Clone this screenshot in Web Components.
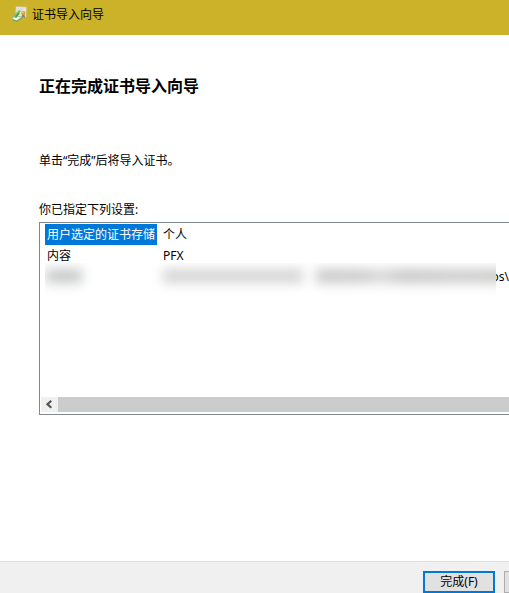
<!DOCTYPE html>
<html lang="zh-CN">
<head>
<meta charset="utf-8">
<title>证书导入向导</title>
<style>
html,body{margin:0;height:100%;overflow:hidden}
body{font:12px/16px "Noto Sans","Noto Sans CJK SC",sans-serif;color:#000}
</style>
</head>
<body>
<wizard-window>
  <wizard-title slot="title">证书导入向导</wizard-title>
  <wizard-page>
    <span slot="heading">正在完成证书导入向导</span>
    <span slot="hint">单击“完成”后将导入证书。</span>
    <span slot="label">你已指定下列设置:</span>
    <settings-list>
      <settings-row selected><span slot="name">用户选定的证书存储</span>个人</settings-row>
      <settings-row><span slot="name">内容</span>PFX</settings-row>
      <redacted-row>os\</redacted-row>
    </settings-list>
  </wizard-page>
  <wizard-button slot="footer" primary>完成(F)</wizard-button>
  <wizard-button slot="footer"></wizard-button>
</wizard-window>
<script>
function define(name, html) {
  const t = document.createElement('template');
  t.innerHTML = html;
  customElements.define(name, class extends HTMLElement {
    constructor() {
      super();
      this.attachShadow({mode: 'open'}).append(t.content.cloneNode(true));
    }
  });
}

define('wizard-window', `<style>
:host{display:flex;flex-direction:column;width:509px;height:593px;overflow:hidden;background:#fff}
main{flex:1;min-height:0}
footer{box-sizing:border-box;height:32px;flex:none;background:#f0f0f0;border-top:1px solid #dfdfdf;padding:9px 0 0 423px;display:flex;gap:9px}
</style><slot name="title"></slot><main><slot></slot></main><footer><slot name="footer"></slot></footer>`);

define('wizard-title', `<style>
:host{display:flex;box-sizing:border-box;height:35px;flex:none;background:#cbb228;padding:5px 0 0 11px;gap:4px}
svg{flex:none}
span{font-size:12px;line-height:19px;white-space:nowrap}
</style><svg width="17" height="18" viewBox="0 0 17 18">
<path d="M5 1.5 15.5 2 15 12 4.5 11.5Z" fill="#e9e7d8" stroke="#c9c3a2" stroke-width=".7"/>
<path d="M6.5 4h6M6.3 6h5" stroke="#d3d5c9"/>
<path d="M1 12 8 5l2 1-4 6Z" fill="#82c36b"/>
<path d="M0.5 13 6 11l5 1.5-6 3.8Z" fill="#f3f6ee" stroke="#9baf91" stroke-width=".7"/>
<path d="M4.5 12.5 8 8" stroke="#4c9d43" stroke-width="1.8"/>
<path d="m1.5 14.8 4 1.4 5-3" fill="none" stroke="#63a54d" stroke-width="1.2"/>
<path d="m11 9-.5 4 1.8-1 1.7 1-.5-4Z" fill="#7484a0"/>
<circle cx="12.3" cy="8" r="2.1" fill="#e1a322"/><circle cx="12" cy="7.6" r=".8" fill="#f3cd62"/>
</svg><span><slot></slot></span>`);

define('wizard-page', `<style>
:host{display:block;padding:41px 0 0 39px;white-space:nowrap}
h1{font-size:16px;line-height:20px;margin:0;font-weight:700}
p{margin:0}
.hint{margin-top:57px}.label{margin:33px 0 4px}
</style><h1><slot name="heading"></slot></h1><p class="hint"><slot name="hint"></slot></p>
<p class="label"><slot name="label"></slot></p><slot></slot>`);

define('settings-list', `<style>
:host{display:flex;flex-direction:column;box-sizing:border-box;width:480px;height:193px;border:1px solid #828790;padding:1px 1px 2px;background:#fff}
.rows{flex:1;padding:0 0 0 4px}
.bar{display:flex;height:15px;background:#ccc}
.arrow{width:17px;background:#f0f0f0;display:block}
</style><div class="rows"><slot></slot></div>
<div class="bar"><svg class="arrow" width="17" height="15" viewBox="0 0 17 15"><path d="m10.3 3.8-3.8 3.5 3.8 3.5" fill="none" stroke="#555" stroke-width="2.2"/></svg></div>`);

define('settings-row', `<style>
:host{display:flex;height:21px;line-height:21px;gap:6px}
.name{box-sizing:border-box;width:112px;padding-left:2px;flex:none}
:host([selected]) .name{background:#0078d7;color:#fff}
</style><div class="name"><slot name="name"></slot></div><div><slot></slot></div>`);

define('redacted-row', `<style>
:host{display:flex;height:32px;line-height:21px;margin-top:-3px}
.mask{width:451px;height:32px;overflow:hidden;flex:none;display:flex;box-sizing:border-box;padding-top:6px}
i{display:block;height:14px;filter:blur(6px);flex:none}
.a{width:36px;margin-left:1px;background:#c6c8c8}
.b{width:140px;margin-left:81px;background:#d4d4d4}
.c{width:194px;margin-left:13px;background:linear-gradient(90deg,#c8c8c8,#cbcbcb 25%,#d8d8d8 33%,#c8c6c8 46%,#cdcdcc 75%,#c8c8c8)}
.tail{overflow:hidden;width:13px;padding-top:3px;display:flex;justify-content:flex-end}
</style><div class="mask"><i class="a"></i><i class="b"></i><i class="c"></i></div><div class="tail"><slot></slot></div>`);

define('wizard-button', `<style>
:host{display:block;box-sizing:border-box;width:73px;height:22px;flex:none;border:1px solid #adadad;background:#e1e1e1;text-align:center;line-height:19px}
:host([primary]){width:72px;border:2px solid #0078d7;line-height:18px}
</style><slot></slot>`);
</script>
</body>
</html>
